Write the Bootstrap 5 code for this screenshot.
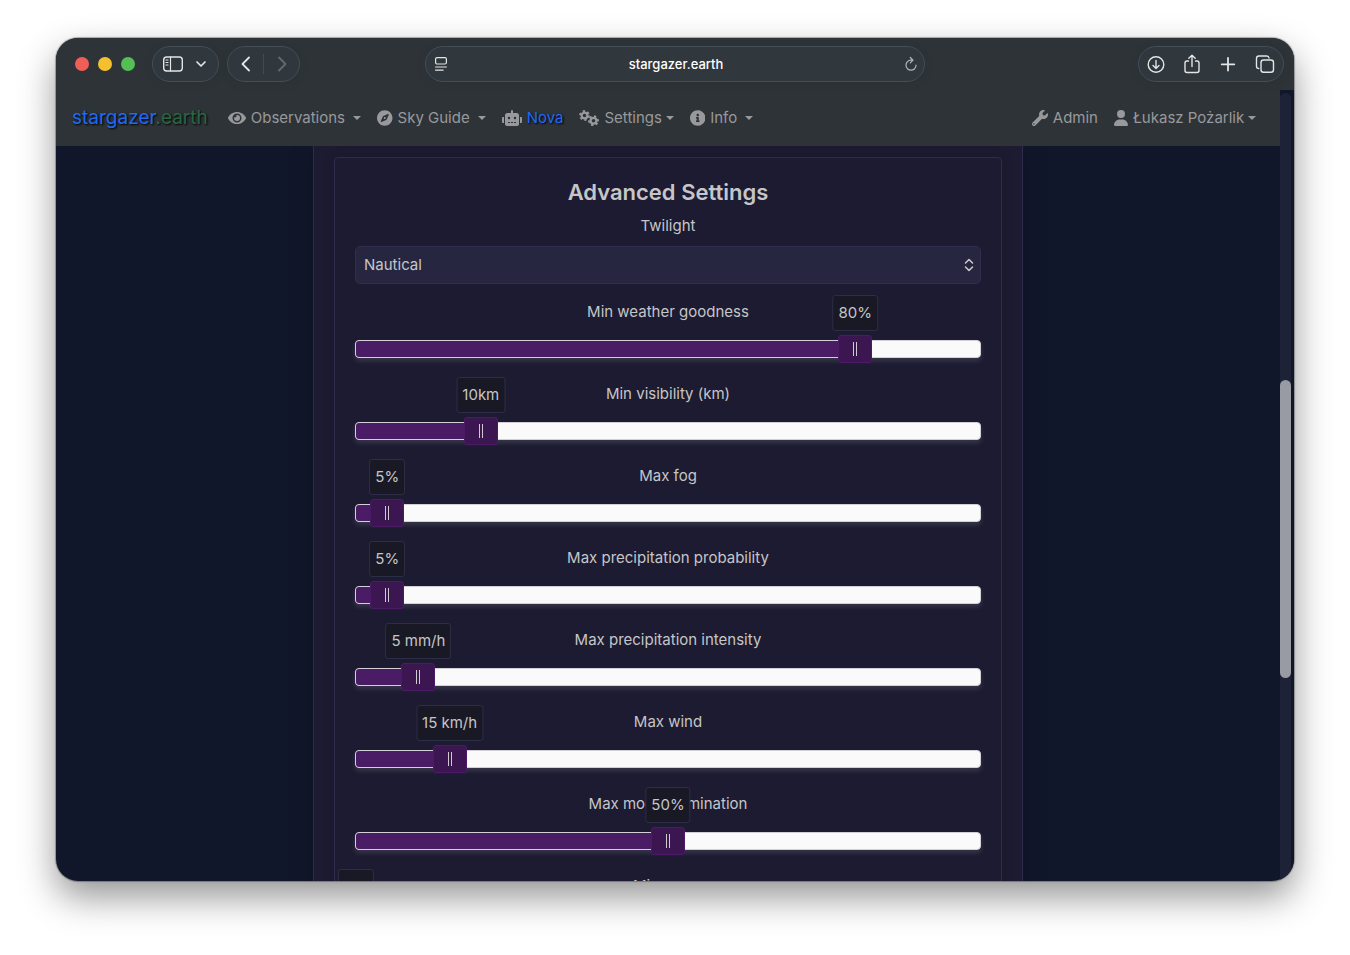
<!DOCTYPE html>
<html lang="en" data-bs-theme="dark">
<head>
<meta charset="utf-8">
<meta name="viewport" content="width=device-width, initial-scale=1">
<title>stargazer.earth</title>
<link rel="stylesheet" href="https://cdn.jsdelivr.net/npm/bootstrap@5.3.0/dist/css/bootstrap.min.css">
<style>
  body { background: #fff; color: #c6c6c8; font-family: Inter, "Liberation Sans", sans-serif; font-size: 15px; line-height: 24px; padding: 38px 56px 74px; }
  .browser { background: #11172a; border-radius: 22px; box-shadow: 0 0 1px 1px rgba(0,0,0,.3), 0 16px 36px rgba(0,0,0,.42); }

  /* browser toolbar */
  .toolbar { background: #2e3337; height: 52px; padding: 0 10px; }
  .lamps { gap: 9px; margin: 0 17px 0 9px; }
  .lamp { width: 14px; height: 14px; border-radius: 50%; }
  .lamp-close { background: #ef5f57; }
  .lamp-min { background: #f5c02f; }
  .lamp-zoom { background: #54bf55; }
  .pill { height: 36px; border: 1px solid #434e5b; border-radius: 18px; background: #30373d; box-shadow: 0 2px 12px rgba(0,0,0,.06); }
  .pill button { background: none; border: 0; padding: 0; color: #e4e5e6; display: flex; align-items: center; justify-content: center; }
  .pill svg { fill: none; stroke: currentColor; stroke-width: 1.4; stroke-linecap: round; stroke-linejoin: round; }
  .pill-tools { width: 146px; }
  .pill-tabs { width: 67px; }
  .pill-history { width: 73px; }
  .split { width: 1px; height: 20px; background: #434a52; }
  .side { flex: 1; }
  .address { flex: 0 1 500px; padding: 0 6px 0 8px; }
  .address svg { stroke-width: 1.2; }
  .address input { background: none; border: 0; outline: 0; color: #fff; font-size: 13px; font-weight: 500; text-align: center; min-width: 0; }
  .pill .muted-btn { color: #646a71; }
  .pill .soft-btn { color: #b4b7ba; }

  /* site navigation */
  .site-nav { background: #2e3337; height: 56px; padding: 0 16px; }
  .site-nav .navbar-brand { color: #1f69f5; font-size: 19px; text-shadow: 1px 1px 2px #000; margin-right: 12px; }
  .site-nav .navbar-brand span { color: #286741; }
  .site-nav .nav-link { color: #98999c; padding: 8px; white-space: pre; display: flex; align-items: center; }
  .site-nav .nav-link svg { height: 16px; fill: currentColor; margin-right: 5px; }
  .site-nav .nova { color: #1f69f5; text-shadow: 1px 1px 2px #000; }
  .gap-caret::after { margin-left: 8px; }

  /* settings panel */
  .panel { max-width: 710px; background: #1c1b31; border: solid #2e2c4a; border-width: 0 1px; padding: 11px 20px 20px; box-shadow: 0 0 24px rgba(0,0,0,.2); }
  .panel-inner { border: 1px solid #2e2c4a; border-radius: 4px; padding: 20px; box-shadow: 0 0 12px rgba(0,0,0,.16); }
  .panel h2 { color: #c6c6c8; font-size: 22px; line-height: 28px; font-weight: 600; margin-bottom: 8px; }
  .twilight { height: 38px; padding: 0 30px 0 8px; color: #c6c6c8; font-size: 15px; border: 1px solid #302e4c; border-radius: 5px; background-color: #272641; background-position: right 5px center; background-size: 12px 16px;
    background-image: url("data:image/svg+xml,%3Csvg xmlns='http://www.w3.org/2000/svg' viewBox='0 0 12 16'%3E%3Cpath fill='none' stroke='%23c6c6c8' stroke-width='1.6' stroke-linecap='round' stroke-linejoin='round' d='M2.5 6 6 2.5 9.5 6M2.5 10 6 13.5 9.5 10'/%3E%3C/svg%3E"); }
  .rail { height: 18px; margin-top: 16px; border: 1px solid #d2d0d6; border-radius: 4px; background: #fafafa; box-shadow: 0 3px 5px rgba(120,120,130,.3); }
  .rail-fill { height: 16px; background: #4b1c66; border-radius: 3px 0 0 3px; }
  .rail input { position: absolute; top: -6px; left: -17px; width: calc(100% + 34px); height: 28px; margin: 0; background: none; appearance: none; -webkit-appearance: none; }
  .rail input::-webkit-slider-thumb { -webkit-appearance: none; width: 34px; height: 28px; border: 1px solid #4c1a66; border-radius: 3px;
    background: linear-gradient(90deg, #ccc 1px, transparent 1px 3px, #ccc 3px) center / 4px 14px no-repeat #3c1651; }
  .rail output { position: absolute; bottom: calc(100% + 10px); transform: translateX(-50%); height: 36px; line-height: 34px; padding: 0 5px; border: 1px solid #2e2d47; border-radius: 3px; background: #191926; white-space: nowrap; }

  /* page scroll indicator */
  .gutter { width: 14px; padding: 3px 3px 0 0; background: #11172a; }
  .gutter-track { background: #1e2236; border-radius: 6px 6px 0 0; }
  .gutter-before { flex: 287; }
  .gutter-thumb { flex: 298; background: #999ba4; border-radius: 6px; }
  .gutter-after { flex: 203; }
</style>
</head>
<body class="vh-100 d-flex flex-column">
<div class="browser flex-fill d-flex flex-column overflow-hidden">
  <div class="toolbar d-flex align-items-center flex-shrink-0">
    <div class="side d-flex align-items-center">
      <div class="lamps d-flex"><span class="lamp lamp-close"></span><span class="lamp lamp-min"></span><span class="lamp lamp-zoom"></span></div>
      <div class="pill pill-tabs d-flex align-items-center justify-content-center gap-2 me-2">
        <button type="button" aria-label="Sidebar"><svg width="22" height="16" viewBox="0 0 22 16"><rect x="1.700" y="1" width="18.600" height="14" rx="3"/><path d="M8.500 1v14M4 4h2M4 6.500h2M4 9h2" stroke-width="1.200"/></svg></button>
        <button type="button" aria-label="Tab groups"><svg width="18" height="12" viewBox="0 0 18 12"><path d="m5 4 4 4 4-4" stroke-width="1.700"/></svg></button>
      </div>
      <div class="pill pill-history d-flex align-items-center justify-content-between">
        <button type="button" class="flex-fill" aria-label="Back"><svg width="14" height="16" viewBox="0 0 14 16"><path d="M10 1.500 3.500 8l6.500 6.500" stroke-width="1.800"/></svg></button>
        <span class="split"></span>
        <button type="button" class="flex-fill muted-btn" aria-label="Forward"><svg width="14" height="16" viewBox="0 0 14 16"><path d="M4 1.500 10.500 8 4 14.500" stroke-width="1.800"/></svg></button>
      </div>
    </div>
    <div class="pill address d-flex align-items-center">
      <button type="button" aria-label="Page menu"><svg width="14" height="16" viewBox="0 0 14 16"><rect x="1.600" y="1.600" width="10.800" height="6.400" rx="1.500"/><path d="M1.600 11h10.800M1.600 14.200h7.500"/></svg></button>
      <input class="flex-fill" type="text" value="stargazer.earth" aria-label="Address">
      <button type="button" class="soft-btn" aria-label="Reload"><svg width="14" height="16" viewBox="0 0 14 16"><path d="M7 4.200A5 5 0 1 0 12 9.200M7 4.200h1.500M6.300 1.500 9 4.200 6.300 6.900"/></svg></button>
    </div>
    <div class="side d-flex justify-content-end">
      <div class="pill pill-tools d-flex align-items-center justify-content-between px-2">
        <button type="button" aria-label="Downloads"><svg width="18" height="20" viewBox="0 0 18 20"><circle cx="9" cy="10.500" r="7.800"/><path d="M9 6.500v8M6 11.500l3 3 3-3"/></svg></button>
        <button type="button" aria-label="Share"><svg width="18" height="20" viewBox="0 0 18 20"><path d="M5.500 7H4a2 2 0 0 0-2 2v7.500a2 2 0 0 0 2 2h10a2 2 0 0 0 2-2V9a2 2 0 0 0-2-2h-1.500M9 12.500V1.300M5.800 4.300 9 1.200l3.200 3.100"/></svg></button>
        <button type="button" aria-label="New tab"><svg width="18" height="20" viewBox="0 0 18 20"><path d="M9 4v12.600M2.700 10.300h12.600" stroke-width="1.800"/></svg></button>
        <button type="button" aria-label="Tab overview"><svg width="20" height="20" viewBox="0 0 20 20"><rect x="6" y="6" width="12.500" height="12.300" rx="2.500"/><path d="M3.800 14.500A2.300 2.300 0 0 1 1.500 12.200V4.500A2.500 2.500 0 0 1 4 2h7.700a2.300 2.300 0 0 1 2.300 2"/></svg></button>
      </div>
    </div>
  </div>

  <div class="d-flex flex-fill overflow-hidden">
    <div class="flex-fill d-flex flex-column overflow-hidden">
      <nav class="site-nav navbar navbar-expand flex-shrink-0">
        <a class="navbar-brand" href="#">stargazer<span>.earth</span></a>
        <div class="navbar-nav me-auto">
          <a class="nav-link dropdown-toggle gap-caret" href="#"><svg viewBox="0 0 576 512"><path d="M572.520 241.400C518.290 135.590 410.930 64 288 64S57.680 135.640 3.480 241.410a32.350 32.350 0 0 0 0 29.190C57.710 376.410 165.070 448 288 448s230.320-71.640 284.520-177.410a32.350 32.350 0 0 0 0-29.190zM288 400a144 144 0 1 1 144-144 143.930 143.930 0 0 1-144 144zm0-240a95.310 95.310 0 0 0-25.310 3.790 47.850 47.850 0 0 1-66.900 66.900A95.780 95.780 0 1 0 288 160z"/></svg>Observations</a>
          <a class="nav-link dropdown-toggle gap-caret" href="#"><svg viewBox="0 0 496 512"><path d="M225.380 233.370c-12.500 12.500-12.500 32.760 0 45.250 12.490 12.500 32.760 12.500 45.250 0 12.500-12.500 12.500-32.760 0-45.250-12.500-12.490-32.760-12.490-45.250 0zM248 8C111.030 8 0 119.030 0 256s111.030 248 248 248 248-111.030 248-248S384.970 8 248 8zm126.140 148.050L308.170 300.400a31.938 31.938 0 0 1-15.770 15.770l-144.340 65.970c-16.650 7.610-33.810-9.550-26.200-26.200l65.980-144.350a31.938 31.938 0 0 1 15.770-15.770l144.340-65.970c16.650-7.600 33.800 9.550 26.190 26.200z"/></svg>Sky Guide</a>
          <a class="nav-link" href="#"><svg viewBox="0 0 640 512"><path d="M32 224H64V416H32A32 32 0 0 1 0 384V256A32 32 0 0 1 32 224Zm512-48V448a64 64 0 0 1-64 64H160a64 64 0 0 1-64-64V176a80 80 0 0 1 80-80H288V32a32 32 0 0 1 64 0V96H464A80 80 0 0 1 544 176ZM264 256a40 40 0 1 0-40 40A40 40 0 0 0 264 256Zm-8 128H192v32h64Zm96 0H288v32h64ZM456 256a40 40 0 1 0-40 40A40 40 0 0 0 456 256Zm-8 128H384v32h64ZM640 256V384a32 32 0 0 1-32 32H576V224h32A32 32 0 0 1 640 256Z"/></svg><span class="nova">Nova</span></a>
          <a class="nav-link dropdown-toggle" href="#"><svg viewBox="0 0 20 16"><g fill="none" stroke="currentColor"><circle cx="5.500" cy="5.500" r="2.900" stroke-width="2.200"/><circle cx="5.500" cy="5.500" r="4.500" stroke-width="1.800" stroke-dasharray="2.300 2.412"/><circle cx="14.500" cy="10.700" r="2.900" stroke-width="2.200"/><circle cx="14.500" cy="10.700" r="4.500" stroke-width="1.800" stroke-dasharray="2.300 2.412" transform="rotate(30 14.500 10.700)"/></g></svg>Settings</a>
          <a class="nav-link dropdown-toggle gap-caret" href="#"><svg viewBox="8 0 496 512"><path d="M256 8C119.043 8 8 119.083 8 256c0 136.997 111.043 248 248 248s248-111.003 248-248C504 119.083 392.957 8 256 8zm0 110c23.196 0 42 18.804 42 42s-18.804 42-42 42-42-18.804-42-42 18.804-42 42-42zm56 254c0 6.627-5.373 12-12 12h-88c-6.627 0-12-5.373-12-12v-24c0-6.627 5.373-12 12-12h12v-64h-12c-6.627 0-12-5.373-12-12v-24c0-6.627 5.373-12 12-12h64c6.627 0 12 5.373 12 12v100h12c6.627 0 12 5.373 12 12v24z"/></svg>Info</a>
        </div>
        <div class="navbar-nav">
          <a class="nav-link" href="#"><svg viewBox="0 0 512 512"><path d="M507.730 109.100c-2.240-9.030-13.540-12.090-20.120-5.510l-74.360 74.360-67.880-11.310-11.310-67.880 74.360-74.360c6.620-6.620 3.430-17.900-5.660-20.160-47.380-11.740-99.550.910-136.580 37.930-39.640 39.640-50.550 97.100-34.050 147.200L18.740 402.760c-24.990 24.990-24.990 65.510 0 90.500 24.990 24.990 65.510 24.990 90.500 0l213.210-213.210c50.120 16.710 107.470 5.680 147.370-34.220 37.070-37.070 49.700-89.320 37.910-136.730zM64 472c-13.250 0-24-10.750-24-24 0-13.260 10.750-24 24-24s24 10.740 24 24c0 13.250-10.750 24-24 24z"/></svg>Admin</a>
          <a class="nav-link dropdown-toggle" href="#"><svg viewBox="0 0 448 512"><path d="M224 256A128 128 0 1 0 224 0a128 128 0 1 0 0 256zm-45.700 48C79.800 304 0 383.800 0 482.300C0 498.700 13.300 512 29.700 512H418.300c16.400 0 29.700-13.300 29.700-29.700C448 383.800 368.200 304 269.700 304H178.300z"/></svg>Łukasz Pożarlik</a>
        </div>
      </nav>

      <main class="flex-fill overflow-hidden">
        <form class="panel mx-auto text-center">
          <div class="panel-inner">
            <h2>Advanced Settings</h2>
            <label class="d-block mb-2" for="twilight">Twilight</label>
            <select class="form-select twilight mb-3" id="twilight"><option>Nautical</option><option>Civil</option><option>Astronomical</option></select>
            <div class="d-flex flex-column gap-4">
              <div><label class="d-block" for="weather">Min weather goodness</label>
                <div class="rail position-relative"><div class="rail-fill" style="width:80%"></div><input type="range" id="weather" value="80"><output for="weather" style="left:80%">80%</output></div></div>
              <div><label class="d-block" for="visibility">Min visibility (km)</label>
                <div class="rail position-relative"><div class="rail-fill" style="width:20%"></div><input type="range" id="visibility" max="50" value="10"><output for="visibility" style="left:20%">10km</output></div></div>
              <div><label class="d-block" for="fog">Max fog</label>
                <div class="rail position-relative"><div class="rail-fill" style="width:5%"></div><input type="range" id="fog" value="5"><output for="fog" style="left:5%">5%</output></div></div>
              <div><label class="d-block" for="probability">Max precipitation probability</label>
                <div class="rail position-relative"><div class="rail-fill" style="width:5%"></div><input type="range" id="probability" value="5"><output for="probability" style="left:5%">5%</output></div></div>
              <div><label class="d-block" for="intensity">Max precipitation intensity</label>
                <div class="rail position-relative"><div class="rail-fill" style="width:10%"></div><input type="range" id="intensity" max="50" value="5"><output for="intensity" style="left:10%">5 mm/h</output></div></div>
              <div><label class="d-block" for="wind">Max wind</label>
                <div class="rail position-relative"><div class="rail-fill" style="width:15%"></div><input type="range" id="wind" value="15"><output for="wind" style="left:15%">15 km/h</output></div></div>
              <div><label class="d-block" for="moon">Max moon illumination</label>
                <div class="rail position-relative"><div class="rail-fill" style="width:50%"></div><input type="range" id="moon" value="50"><output for="moon" style="left:50%">50%</output></div></div>
              <div><label class="d-block" for="score">Min score</label>
                <div class="rail position-relative"><div class="rail-fill" style="width:0%"></div><input type="range" id="score" value="0"><output for="score" style="left:0%">0%</output></div></div>
            </div>
          </div>
        </form>
      </main>
    </div>
    <div class="gutter d-flex flex-shrink-0"><div class="gutter-track flex-fill d-flex flex-column"><span class="gutter-before"></span><span class="gutter-thumb"></span><span class="gutter-after"></span></div></div>
  </div>
</div>
<script src="https://cdn.jsdelivr.net/npm/bootstrap@5.3.0/dist/js/bootstrap.bundle.min.js"></script>
</body>
</html>
